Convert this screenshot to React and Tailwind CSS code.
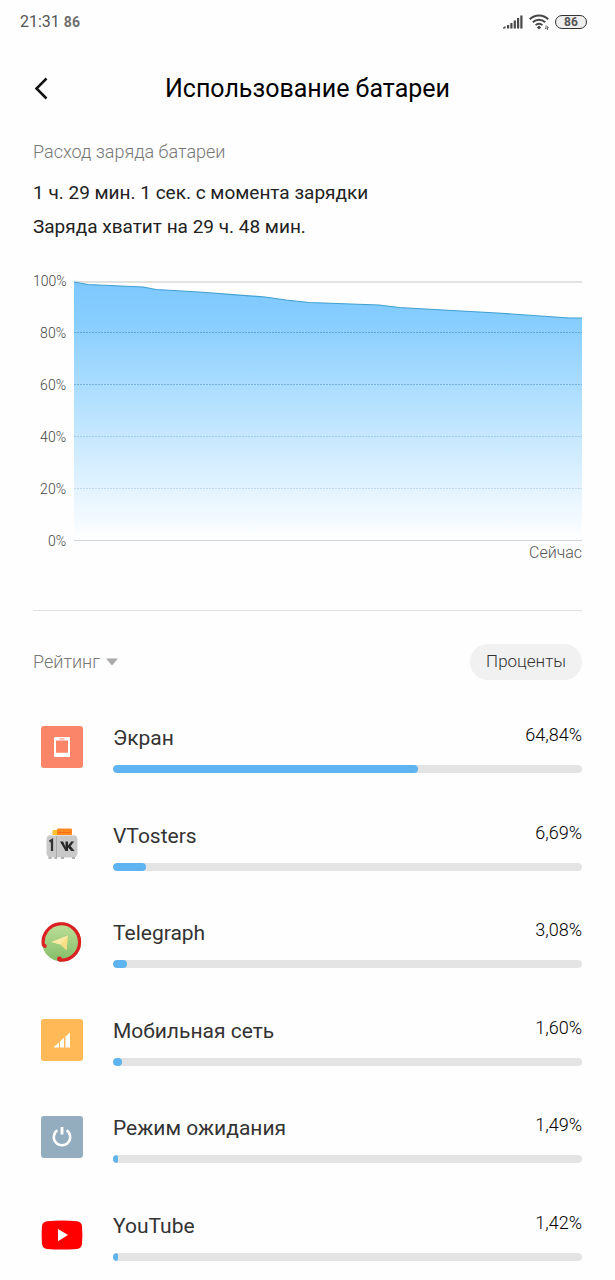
import React, { useState } from 'react';

const levels = ['100%', '80%', '60%', '40%', '20%', '0%'];

const apps = [
  { name: 'Экран', percent: 65, label: '64,84%', time: '58 мин.', Icon: ScreenIcon },
  { name: 'VTosters', percent: 7, label: '6,69%', time: '6 мин.', Icon: TostersIcon },
  { name: 'Telegraph', percent: 3, label: '3,08%', time: '3 мин.', Icon: TelegraphIcon },
  { name: 'Мобильная сеть', percent: 2, label: '1,60%', time: '1 мин.', Icon: NetworkIcon },
  { name: 'Режим ожидания', percent: 1, label: '1,49%', time: '1 мин.', Icon: StandbyIcon },
  { name: 'YouTube', percent: 1, label: '1,42%', time: '1 мин.', Icon: YoutubeIcon },
];

function ScreenIcon() {
  return (
    <svg viewBox="0 0 42 42" className="size-[42px]" aria-hidden="true">
      <rect width="42" height="42" rx="3" fill="#fb8568" />
      <path fillRule="evenodd" fill="#fff" d="M14 11h14q1 0 1 1v18q0 1-1 1H14q-1 0-1-1V12q0-1 1-1zM15 14.600v12.200h12V14.600z" />
      <path d="M18.500 12.900h5" stroke="#fb8568" strokeWidth="1" />
    </svg>
  );
}

function TostersIcon() {
  return (
    <svg viewBox="0 0 42 42" className="size-[42px]" aria-hidden="true">
      <rect x="11.500" y="6" width="10" height="9" rx="1" fill="#ffc02b" />
      <rect x="16" y="4.500" width="15" height="11" rx="1" fill="#ff8a22" />
      <path d="M17 8.500h13" stroke="#ff6d12" strokeWidth="1" />
      <rect x="5.500" y="11" width="31" height="22.500" rx="4.500" fill="#c9c9c9" />
      <path d="M9.500 11.500h23" stroke="#e0e0e0" strokeWidth="1" />
      <path d="M15.500 12v21" stroke="#aaa" strokeWidth="1" />
      <path d="M8.500 17.500l2.500-1.500v11" fill="none" stroke="#333" strokeWidth="2.300" />
      <path d="M19 17.500h3.200l2.300 5.500v-5.500h2.500v4l3.200-4h3l-3.600 4.500 4 5h-3.400l-3.200-3.600v3.600h-2.500z" fill="#2b2b2b" />
      <path d="M7.500 34h3M13.500 34h2.500M20 34h3M31 34h3" stroke="#999" strokeWidth="1.300" />
    </svg>
  );
}

function TelegraphIcon() {
  return (
    <svg viewBox="0 0 42 42" className="size-[42px]" aria-hidden="true">
      <defs>
        <linearGradient id="leaf" x1="0" y1="0" x2="0" y2="1">
          <stop offset="0" stopColor="#bfe09a" />
          <stop offset="1" stopColor="#84bd68" />
        </linearGradient>
      </defs>
      <circle cx="20.500" cy="21" r="19.500" fill="url(#leaf)" />
      <path d="M2.600 25A18.200 18.200 0 1 1 18 39" fill="none" stroke="#dc1f22" strokeWidth="3.200" />
      <circle cx="3.800" cy="25" r="2" fill="#dc1f22" />
      <circle cx="18.500" cy="38" r="2.400" fill="#dc1f22" />
      <path d="M10.500 21L27 14.500 25.500 29.500 19.500 23.500z" fill="#f8df86" />
      <path d="M10.500 21L27 14.500 19.500 23.500z" fill="#fbeaa5" />
    </svg>
  );
}

function NetworkIcon() {
  return (
    <svg viewBox="0 0 42 42" className="size-[42px]" aria-hidden="true">
      <rect width="42" height="42" rx="3" fill="#ffb957" />
      <path d="M13 28.500v-.8l5-4.200v5zM19 28.500v-6.300l4-3.400v9.700zM24.500 28.500V17.600l4.500-4.100v15z" fill="#fff" />
    </svg>
  );
}

function StandbyIcon() {
  return (
    <svg viewBox="0 0 42 42" className="size-[42px]" aria-hidden="true">
      <rect width="42" height="42" rx="3" fill="#93adbf" />
      <path d="M16.400 14.300a8.200 8.200 0 1 0 9.200 0" fill="none" stroke="#fff" strokeWidth="2.500" />
      <path d="M21 11v7.500" stroke="#fff" strokeWidth="2.800" />
    </svg>
  );
}

function YoutubeIcon() {
  return (
    <svg viewBox="0 0 42 42" className="size-[42px]" aria-hidden="true">
      <path d="M6 7.200Q21 6 36 7.200 40.300 7.600 41 12 41.800 21 41 30 40.300 34.600 36 35 21 36.200 6 35 1.700 34.600 1 30 .2 21 1 12 1.700 7.600 6 7.200z" fill="#f00" />
      <path d="M17 15v12.200L27 21.100z" fill="#fff" />
    </svg>
  );
}

const StatusBar = () => (
  <div className="flex h-11 items-center justify-between pl-5 pr-7 text-[#555]">
    <div className="flex items-center gap-1">
      <span className="text-base">21:31</span>
      <span className="text-sm font-bold text-[#707070]">86</span>
    </div>
    <div className="flex items-center gap-1.5">
      <svg viewBox="0 0 20 14" className="h-3.5 w-5" fill="#484848" aria-hidden="true">
        <path d="M0 13.500v-1l2.500-1.500v2.500zM4 10h2.200v3.500H4zM7.300 8h2.200v5.500H7.300zM10.700 5.500h2.200v8h-2.200zM14 3h2.200v10.500H14zM17.300 0.500h2.200v13h-2.200z" />
      </svg>
      <svg viewBox="0 0 20 16" className="h-4 w-5" fill="none" stroke="#484848" aria-hidden="true">
        <path d="M.8 5.200a13 13 0 0 1 18.400 0M3.800 8.300a8.800 8.800 0 0 1 12.400 0M6.600 11.100a4.800 4.800 0 0 1 6.800 0" strokeWidth="2" />
        <path d="M10 11.600l2.200 1.800-2.200 2.100-2.200-2.100z" fill="#484848" stroke="none" />
        <path d="M17 11.500v3.500l-1-1M18.500 16v-3.500l1 1" strokeWidth=".8" />
      </svg>
      <span className="flex h-3.5 w-8 items-center justify-center rounded-full border border-[#333] bg-[#eee] text-xs leading-3 font-bold">
        86
      </span>
    </div>
  </div>
);

const BatteryChart = () => (
  <div className="mt-[37px] flex gap-2">
    <div className="-my-2 flex w-[33px] flex-col justify-between text-right text-sm leading-4 font-light text-[#444]">
      {levels.map((level) => (
        <span key={level}>{level}</span>
      ))}
    </div>
    <svg viewBox="0 0 508 260" preserveAspectRatio="none" className="h-[260px] min-w-0 flex-1" role="img" aria-label="Расход заряда батареи">
      <defs>
        <linearGradient id="charge" x1="0" y1="0" x2="0" y2="1">
          <stop offset="0" stopColor="#7dc8ff" />
          <stop offset="0.15" stopColor="#87ceff" />
          <stop offset="1" stopColor="#ffffff" />
        </linearGradient>
      </defs>
      <path d="M0 0h508" stroke="#e2e2e2" strokeWidth="4" />
      <path d="M0 1L14 3.500 69 6 82 8.500 125 11 191 16 212 19 235 21.500 305 24 325 26.500 423 32 495 37H508V260H0z" fill="url(#charge)" />
      <path d="M0 1L14 3.500 69 6 82 8.500 125 11 191 16 212 19 235 21.500 305 24 325 26.500 423 32 495 37H508" fill="none" stroke="#3f9fcf" strokeWidth="1.200" />
      <g stroke="#4a88b0" strokeWidth="1" strokeDasharray="2 1">
        <path d="M0 51.500h508" strokeOpacity=".6" />
        <path d="M0 103.500h508" strokeOpacity=".5" />
        <path d="M0 155.500h508" strokeOpacity=".3" />
        <path d="M0 207.500h508" strokeOpacity=".25" />
      </g>
      <path d="M0 259.500h508" stroke="#d2d6d8" strokeWidth="1" />
    </svg>
  </div>
);

const AppRow = ({ app, showPercent }) => (
  <li className="flex items-start gap-[30px] pt-[29px] pl-2">
    <div className="mt-0.5">
      <app.Icon />
    </div>
    <div className="min-w-0 flex-1">
      <div className="flex items-start justify-between">
        <span className="text-[21px] leading-7 text-[#333]">{app.name}</span>
        <span className="text-lg leading-[22px] font-light text-black">{showPercent ? app.label : app.time}</span>
      </div>
      <div className="mt-[13px] h-2 overflow-hidden rounded-full bg-[#e4e4e4]">
        <div className="h-full rounded-full bg-[#5db4f0]" style={{ width: `${app.percent}%` }} />
      </div>
    </div>
  </li>
);

const App = () => {
  const [showPercent, setShowPercent] = useState(true);

  return (
    <div className="flex min-h-screen flex-col bg-[#fefefe] font-['Roboto','Noto_Sans',sans-serif]">
      <StatusBar />
      <header className="grid h-[90px] grid-cols-[32px_1fr_32px] items-center px-[33px]">
        <button type="button" aria-label="Назад" className="flex size-8 items-center">
          <svg viewBox="0 0 18 24" className="h-6 w-[18px]" fill="none" stroke="#111" strokeWidth="2.500" aria-hidden="true">
            <path d="M13.500 1.500L3.500 11.500 13.500 21.500" />
          </svg>
        </button>
        <h1 className="text-center text-[25px] text-black">Использование батареи</h1>
      </header>

      <main className="flex flex-1 flex-col px-[33px]">
        <section className="border-b border-[#e0e0e0] pb-[45px]">
          <h2 className="mt-1.5 text-lg leading-6 font-light text-[#777]">Расход заряда батареи</h2>
          <p className="mt-3 text-[19px] leading-[34px] text-[#222]">
            1 ч. 29 мин. 1 сек. с момента зарядки
            <br />
            Заряда хватит на 29 ч. 48 мин.
          </p>
          <BatteryChart />
          <p className="text-right text-base leading-6 font-light text-[#555]">Сейчас</p>
        </section>

        <div className="mt-[33px] flex items-center justify-between">
          <button type="button" className="flex items-center gap-1.5 text-lg font-light text-[#777]">
            Рейтинг
            <svg viewBox="0 0 12 8" className="h-2 w-3" fill="#aaa" aria-hidden="true">
              <path d="M0 .5h12L6 7.500z" />
            </svg>
          </button>
          <button
            type="button"
            onClick={() => setShowPercent(!showPercent)}
            className="h-9 rounded-full bg-[#f1f1f1] px-4 text-[17px] font-light text-[#333]"
          >
            {showPercent ? 'Проценты' : 'Время'}
          </button>
        </div>

        <ul className="mt-[15px] grid flex-1 auto-rows-fr">
          {apps.map((app) => (
            <AppRow key={app.name} app={app} showPercent={showPercent} />
          ))}
        </ul>
      </main>
    </div>
  );
};

export default App;
